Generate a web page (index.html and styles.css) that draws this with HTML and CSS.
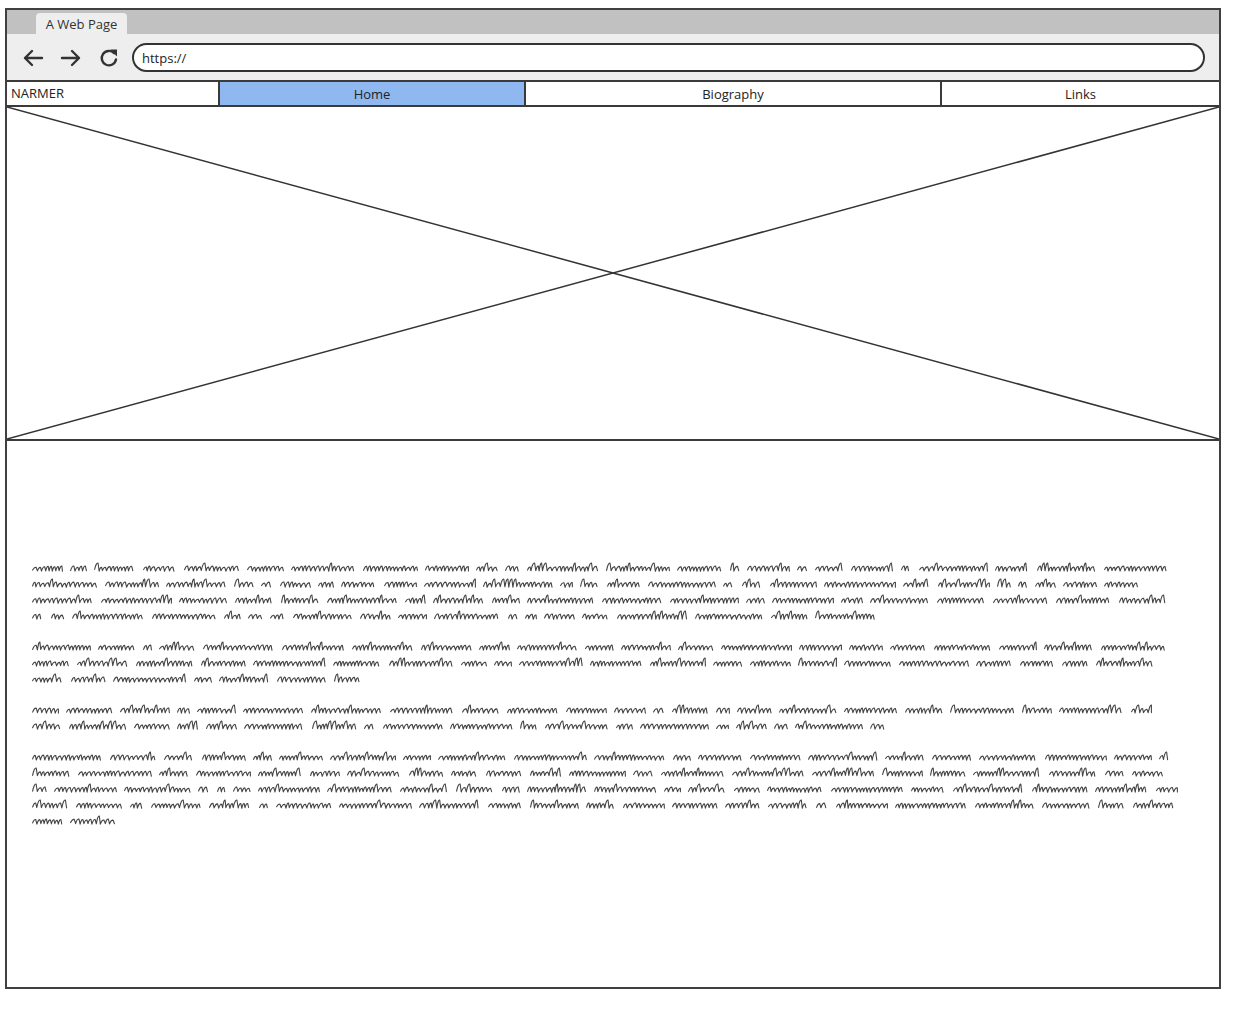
FILE: index.html
```html
<!DOCTYPE html>
<html lang="en">
<head>
<meta charset="utf-8">
<title>A Web Page</title>
<link rel="stylesheet" href="styles.css">
</head>
<body>
<div class="window">
  <div class="tabbar">
    <div class="tab">A Web Page</div>
  </div>
  <div class="toolbar">
    <svg class="tool-icon" width="22" height="20" viewBox="0 0 22 20" aria-hidden="true">
      <path d="M20 10 H3 M10 3 L3 10 L10 17" fill="none" stroke="#333" stroke-width="2.4" stroke-linecap="round" stroke-linejoin="round"/>
    </svg>
    <svg class="tool-icon" width="22" height="20" viewBox="0 0 22 20" aria-hidden="true">
      <path d="M2 10 H19 M12 3 L19 10 L12 17" fill="none" stroke="#333" stroke-width="2.4" stroke-linecap="round" stroke-linejoin="round"/>
    </svg>
    <svg class="tool-icon reload" width="20" height="20" viewBox="0 0 20 20" aria-hidden="true">
      <path d="M15.2 5.2 A7.2 7.2 0 1 0 17 11.5" fill="none" stroke="#333" stroke-width="2.4" stroke-linecap="round"/>
      <path d="M11 1.5 L18 1.5 L18 8.5 Z" fill="#333"/>
    </svg>
    <div class="url">https://</div>
  </div>
  <div class="nav">
    <div class="brand">NARMER</div>
    <div class="navitem home">Home</div>
    <div class="navitem bio">Biography</div>
    <div class="navitem links">Links</div>
  </div>
  <div class="hero">
    <svg class="cross" viewBox="0 0 100 100" preserveAspectRatio="none" aria-hidden="true">
      <line x1="0" y1="0" x2="100" y2="100" vector-effect="non-scaling-stroke"/>
      <line x1="0" y1="100" x2="100" y2="0" vector-effect="non-scaling-stroke"/>
    </svg>
  </div>
  <div class="content" id="content"></div>
</div>
<script src="script.js"></script>
</body>
</html>
```
FILE: styles.css
```css
* { box-sizing: border-box; }
html, body { margin: 0; padding: 0; background: #ffffff; }
body {
  font-family: "Open Sans", "Liberation Sans", sans-serif;
  font-size: 13px;
  color: #222;
}
.window {
  margin: 8px 0 0 5px;
  width: 1216px;
  border: 2px solid #404040;
  display: flex;
  flex-direction: column;
}
.tabbar {
  height: 24px;
  background: #c1c1c1;
  padding-left: 29px;
  display: flex;
  align-items: flex-end;
}
.tab {
  width: 91px;
  height: 21px;
  background: #eeeeee;
  border-radius: 4px 4px 0 0;
  display: flex;
  align-items: center;
  justify-content: center;
  color: #333;
  font-size: 13px;
}
.toolbar {
  height: 46px;
  background: #eeeeee;
  display: flex;
  align-items: center;
  padding: 1px 14px 0 15px;
}
.tool-icon { flex: none; margin-right: 16px; }
.tool-icon.reload { margin-left: 1px; margin-right: 13px; }
.url {
  flex: 1;
  height: 29px;
  border: 2px solid #333;
  border-radius: 15px;
  background: #fff;
  display: flex;
  align-items: center;
  padding-left: 8px;
  font-size: 13px;
  color: #222;
}
.nav {
  height: 27px;
  display: flex;
  border-top: 2px solid #3a3a3a;
  border-bottom: 2px solid #3a3a3a;
}
.brand {
  width: 213px;
  border-right: 2px solid #3a3a3a;
  padding-left: 4px;
  display: flex;
  align-items: center;
  padding-bottom: 2px;
  background: #fff;
  color: #222;
}
.navitem {
  display: flex;
  align-items: center;
  justify-content: center;
  background: #fff;
  color: #222;
}
.home { width: 306px; background: #8fb8f0; border-right: 2px solid #3a3a3a; }
.bio { width: 416px; border-right: 2px solid #3a3a3a; }
.links { flex: 1; border-radius: 0 5px 5px 0; }
.hero {
  height: 334px;
  border-bottom: 2px solid #3a3a3a;
  position: relative;
}
.cross {
  display: block;
  width: 100%;
  height: 100%;
}
.cross line { stroke: #333; stroke-width: 1.5; }
.content {
  height: 546px;
  padding: 119px 0 0 25px;
}
.para { margin-bottom: 15px; }
.sline {
  height: 16px;
  display: flex;
  align-items: center;
  gap: 7px;
}
.sword { flex: none; display: block; }
.sword path {
  fill: none;
  stroke: #444;
  stroke-width: 1.1;
  stroke-linejoin: round;
  stroke-linecap: round;
}
```
FILE: script.js
```js
(function () {
  var seed = 20240611;
  function rnd() {
    seed |= 0; seed = seed + 0x6D2B79F5 | 0;
    var t = Math.imul(seed ^ seed >>> 15, 1 | seed);
    t = t + Math.imul(t ^ t >>> 7, 61 | t) ^ t;
    return ((t ^ t >>> 14) >>> 0) / 4294967296;
  }
  var NS = "http://www.w3.org/2000/svg";
  function word(w) {
    var svg = document.createElementNS(NS, "svg");
    svg.setAttribute("class", "sword");
    svg.setAttribute("width", w);
    svg.setAttribute("height", 12);
    svg.setAttribute("viewBox", "0 0 " + w + " 12");
    var x = 0.6;
    var base = 8.5;
    var d = "M" + x + " " + (base - rnd()).toFixed(1);
    while (x < w - 3.5) {
      var hw = 3.2 + rnd() * 1.8;
      var tall = rnd() < 0.09;
      var top = tall ? 1 : 4 + rnd() * 1.4;
      var ux = x + hw * 0.75;
      var dx = x + hw;
      if (dx > w - 0.6) dx = w - 0.6;
      if (ux > dx) ux = dx;
      d += " Q" + (x + hw * 0.35).toFixed(1) + " " + (top - 0.5).toFixed(1) + " " + ux.toFixed(1) + " " + top.toFixed(1);
      d += " L" + dx.toFixed(1) + " " + (base + rnd() * 0.8).toFixed(1);
      x = dx;
    }
    var p = document.createElementNS(NS, "path");
    p.setAttribute("d", d);
    svg.appendChild(p);
    return svg;
  }
  var start = 32;
  var paras = [
    [1168, 1138, 1168, 876],
    [1165, 1153, 360],
    [1152, 886],
    [1170, 1165, 1178, 1176, 116]
  ];
  var content = document.getElementById("content");
  var GAP = 7;
  paras.forEach(function (lines) {
    var p = document.createElement("div");
    p.className = "para";
    lines.forEach(function (end) {
      var line = document.createElement("div");
      line.className = "sline";
      var total = end - start;
      var used = 0;
      var widths = [];
      while (true) {
        var w = Math.round(rnd() < 0.22 ? 9 + rnd() * 14 : 26 + rnd() * 48);
        var need = (widths.length ? GAP : 0) + w;
        if (used + need > total) {
          var rest = total - used - (widths.length ? GAP : 0);
          if (rest >= 8) { widths.push(rest); }
          else if (widths.length) { widths[widths.length - 1] += total - used; }
          break;
        }
        widths.push(w);
        used += need;
      }
      widths.forEach(function (w) { line.appendChild(word(w)); });
      p.appendChild(line);
    });
    content.appendChild(p);
  });
})();
```
